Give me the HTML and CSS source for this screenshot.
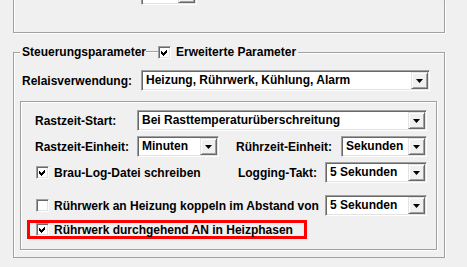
FILE: index.html
```html
<!DOCTYPE html>
<html lang="de">
<head>
  <meta charset="UTF-8" />
  <title>Steuerungsparameter</title>
  <link rel="stylesheet" href="styles.css">
</head>
<body>
  <div class="group group-top">
    <div class="spin">
      <span class="spin-field"></span>
      <span class="btn3d spin-btn"></span>
    </div>
  </div>

  <fieldset class="group group-main">
    <legend class="group-legend">
      <span>Steuerungsparameter</span>
      <span class="legend-line"></span>
      <span class="check">
        <span class="box"><svg width="7" height="7" viewBox="0 0 7 7"><path d="M0 2 L2 4 L6 0 L6 3 L2 7 L0 5 Z" /></svg></span>
        Erweiterte Parameter
      </span>
    </legend>

    <div class="row row-relais">
      <span class="label label-relais">Relaisverwendung:</span>
      <div class="combo combo-grow"><span class="combo-text">Heizung, Rührwerk, Kühlung, Alarm</span><span class="btn3d combo-btn"></span></div>
    </div>

    <div class="panel">
      <div class="row">
        <span class="label label-panel">Rastzeit-Start:</span>
        <div class="combo combo-grow"><span class="combo-text">Bei Rasttemperaturüberschreitung</span><span class="btn3d combo-btn"></span></div>
      </div>

      <div class="row">
        <span class="label label-panel">Rastzeit-Einheit:</span>
        <div class="combo combo-unit"><span class="combo-text">Minuten</span><span class="btn3d combo-btn"></span></div>
        <span class="label push">Rührzeit-Einheit:</span>
        <div class="combo combo-sek"><span class="combo-text">Sekunden</span><span class="btn3d combo-btn"></span></div>
      </div>

      <div class="row row-check">
        <span class="check">
          <span class="box"><svg width="7" height="7" viewBox="0 0 7 7"><path d="M0 2 L2 4 L6 0 L6 3 L2 7 L0 5 Z" /></svg></span>
          Brau-Log-Datei schreiben
        </span>
        <span class="label push">Logging-Takt:</span>
        <div class="combo combo-takt"><span class="combo-text">5 Sekunden</span><span class="btn3d combo-btn"></span></div>
      </div>

      <div class="row row-check row-gap">
        <span class="check">
          <span class="box"></span>
          Rührwerk an Heizung koppeln im Abstand von
        </span>
        <div class="combo combo-takt push"><span class="combo-text">5 Sekunden</span><span class="btn3d combo-btn"></span></div>
      </div>

      <div class="highlight">
        <span class="check">
          <span class="box"><svg width="7" height="7" viewBox="0 0 7 7"><path d="M0 2 L2 4 L6 0 L6 3 L2 7 L0 5 Z" /></svg></span>
          Rührwerk durchgehend AN in Heizphasen
        </span>
      </div>
    </div>
  </fieldset>
</body>
</html>
```

FILE: styles.css
```css
body {
  margin: 0;
  background-color: #f0f0f0;
  font: bold 12px "Liberation Sans", Arial, sans-serif;
  color: #000;
  overflow: hidden;
}

/* etched group frames */
.group {
  box-sizing: border-box;
  width: 432px;
  margin-left: 13px;
  border: 1px solid #a0a0a0;
}
.group-top {
  display: flex;
  align-items: flex-start;
  height: 33px;
  border-top: none;
  padding-left: 127px;
  box-shadow: 1px 1px 0 #fff, inset 1px 0 0 #fff;
}
.group-main {
  margin-top: 12px;
  margin-right: 0;
  margin-bottom: 0;
  min-width: 0;
  padding: 11px 7px 7px 6px;
  box-shadow: 1px 1px 0 #fff, inset 1px 1px 0 #fff;
}
.group-legend {
  display: flex;
  align-items: center;
  line-height: 14px;
  padding: 0 2px;
  margin: 0;
  background-color: #f0f0f0;
}
.legend-line {
  width: 12px;
  height: 0;
  border-top: 1px solid #a0a0a0;
  border-bottom: 1px solid #fff;
}

/* spin edit of the upper group, mostly scrolled away */
.spin {
  box-sizing: border-box;
  display: flex;
  width: 56px;
  height: 21px;
  margin-top: -16px;
  border: 1px solid;
  border-color: #a0a0a0 #fff #fff #a0a0a0;
  padding: 1px;
  background-color: #fff;
  box-shadow: inset 1px 1px 0 #696969, inset -1px -1px 0 #e3e3e3;
}
.spin-field {
  flex: 1;
}

/* raised 3d button face */
.btn3d {
  box-sizing: border-box;
  width: 17px;
  height: 17px;
  background-color: #f0f0f0;
  border: 1px solid;
  border-color: #e3e3e3 #696969 #696969 #e3e3e3;
  box-shadow: inset 1px 1px 0 #fff, inset -1px -1px 0 #a0a0a0;
}
.combo-btn {
  display: flex;
  justify-content: center;
  align-items: center;
}
.combo-btn::after {
  content: "";
  width: 7px;
  height: 4px;
  margin-top: 1px;
  background-color: #000;
  clip-path: polygon(0 0, 100% 0, 50% 100%);
}

/* combo boxes */
.combo {
  box-sizing: border-box;
  display: flex;
  height: 21px;
  border: 1px solid;
  border-color: #a0a0a0 #fff #fff #a0a0a0;
  padding: 1px;
  background-color: #fff;
  box-shadow: inset 1px 1px 0 #696969, inset -1px -1px 0 #e3e3e3;
}
.combo-text {
  flex: 1;
  padding-left: 3px;
  line-height: 17px;
  white-space: nowrap;
  overflow: hidden;
}
.combo-grow {
  flex: 1;
}
.combo-unit {
  width: 82px;
}
.combo-sek {
  width: 86px;
  margin-left: 9px;
}
.combo-takt {
  width: 102px;
  margin-left: 8px;
}

/* rows */
.row {
  display: flex;
  align-items: center;
  height: 21px;
  margin-bottom: 5px;
}
.row-relais {
  margin-right: 7px;
  margin-bottom: 0;
}
.label {
  white-space: nowrap;
}
.label-relais {
  box-sizing: border-box;
  width: 121px;
  padding-left: 2px;
}
.label-panel {
  box-sizing: border-box;
  width: 110px;
  padding-left: 8px;
}
.push {
  margin-left: auto;
}
.row-check {
  padding-left: 9px;
}
.row-gap {
  margin-top: 12px;
  margin-bottom: 4px;
}

/* inner etched panel */
.panel {
  margin-top: 10px;
  padding: 8px 9px 10px 6px;
  border: 1px solid #a0a0a0;
  box-shadow: 1px 1px 0 #fff, inset 1px 1px 0 #fff;
}

/* checkboxes */
.check {
  display: flex;
  align-items: center;
  gap: 5px;
  white-space: nowrap;
}
.box {
  box-sizing: border-box;
  display: flex;
  justify-content: center;
  align-items: center;
  width: 13px;
  height: 13px;
  border: 1px solid;
  border-color: #a0a0a0 #fff #fff #a0a0a0;
  background-color: #fff;
  box-shadow: inset 1px 1px 0 #696969, inset -1px -1px 0 #e3e3e3;
}
.box svg {
  display: block;
  fill: #000;
  shape-rendering: crispEdges;
}

.highlight {
  box-sizing: border-box;
  display: flex;
  align-items: center;
  width: 280px;
  height: 19px;
  padding-left: 6px;
  border: 3px solid #f00;
}
```
